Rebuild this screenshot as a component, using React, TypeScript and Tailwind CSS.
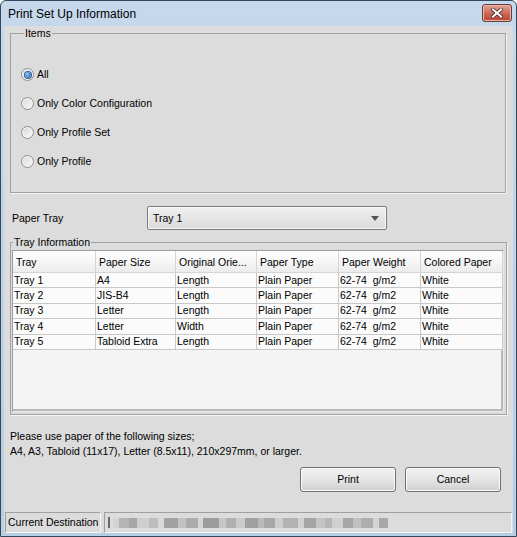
import { useState } from 'react';

const rows = [
  ['Tray 1', 'A4', 'Length', 'Plain Paper', '62-74  g/m2', 'White'],
  ['Tray 2', 'JIS-B4', 'Length', 'Plain Paper', '62-74  g/m2', 'White'],
  ['Tray 3', 'Letter', 'Length', 'Plain Paper', '62-74  g/m2', 'White'],
  ['Tray 4', 'Letter', 'Width', 'Plain Paper', '62-74  g/m2', 'White'],
  ['Tray 5', 'Tabloid Extra', 'Length', 'Plain Paper', '62-74  g/m2', 'White'],
];

const headers = ['Tray', 'Paper Size', 'Original Orie...', 'Paper Type', 'Paper Weight', 'Colored Paper'];

const items = ['All', 'Only Color Configuration', 'Only Profile Set', 'Only Profile'];

// obscured destination text, drawn as a pixel mosaic
const mosaic: [number, string][] = [
  [6, '#d4d4d4'], [10, '#b4b4b4'], [8, '#a6a6a6'], [12, '#cfcfcf'], [9, '#bdbdbd'],
  [6, '#dadada'], [14, '#a2a2a2'], [8, '#c2c2c2'], [12, '#acacac'], [5, '#d6d6d6'],
  [16, '#9c9c9c'], [7, '#c6c6c6'], [10, '#b0b0b0'], [9, '#cbcbcb'], [13, '#a0a0a0'],
  [6, '#bababa'], [11, '#a8a8a8'], [8, '#cecece'], [15, '#b2b2b2'], [6, '#d2d2d2'],
  [12, '#a4a4a4'], [9, '#c4c4c4'], [7, '#b6b6b6'], [11, '#d0d0d0'], [10, '#a6a6a6'],
  [8, '#c0c0c0'], [12, '#aeaeae'], [6, '#d4d4d4'], [9, '#a8a8a8'],
];

function Radio({ checked, label, onClick }: { checked: boolean; label: string; onClick: () => void }) {
  return (
    <button onClick={onClick} className="flex h-[29px] items-center gap-[3px] text-left">
      <span className="flex h-[13px] w-[13px] items-center justify-center rounded-full border border-[#8f8f8f] bg-gradient-to-br from-[#d8d8d8] to-[#fbfbfb] shadow-[inset_0_0_0_1px_#f4f4f4]">
        {checked && (
          <span className="h-[6px] w-[6px] rounded-full bg-[radial-gradient(circle_at_35%_35%,#8cc4f4,#1f5fae)] shadow-[0_0_0_1px_#2b5e96]" />
        )}
      </span>
      <span>{label}</span>
    </button>
  );
}

function Button({ children }: { children: React.ReactNode }) {
  return (
    <button className="h-[25px] w-[96px] rounded-[3px] border border-[#707070] bg-gradient-to-b from-[#f2f2f2] via-[#e6e6e6] to-[#cfcfcf] shadow-[inset_0_0_0_1px_#fbfbfb]">
      {children}
    </button>
  );
}

export default function App() {
  const [item, setItem] = useState(0);

  return (
    <div className="flex h-[537px] w-[517px] flex-col rounded-t-[6px] border border-[#34485c] bg-gradient-to-b from-[#c6d9ec] to-[#b8cee4] font-['Liberation_Sans',sans-serif] text-[10.5px] leading-[13px] text-black">
      {/* Title bar */}
      <div className="flex h-[25px] items-start justify-between pl-[7px] pr-[4px]">
        <span className="mt-[6px] text-[12px] leading-[14px]">Print Set Up Information</span>
        <button className="mt-[3px] flex h-[18px] w-[30px] items-center justify-center rounded-[3px] border border-[#6b3a3a] bg-gradient-to-b from-[#e3a496] via-[#cf6a5a] to-[#b8402f] shadow-[inset_0_0_0_1px_#eab4a8]">
          <svg width="12" height="10" viewBox="0 0 12 10">
            <path d="M2 1.5 L10 8.5 M10 1.5 L2 8.5" stroke="#4a2a2a" strokeWidth="3.6" strokeLinecap="square" />
            <path d="M2 1.5 L10 8.5 M10 1.5 L2 8.5" stroke="#fff" strokeWidth="2" strokeLinecap="square" />
          </svg>
        </button>
      </div>

      {/* Client area */}
      <div className="mx-[3px] mb-[3px] flex flex-1 flex-col bg-[#dcdcdc] pl-[6px] pr-[7px]">
        {/* Items */}
        <fieldset className="mt-[1px] h-[166px] border border-[#a2a2a2] pl-[10px] pt-[20px] shadow-[1px_1px_0_#f6f6f6]">
          <legend className="ml-[3px] px-[1px]">Items</legend>
          <div className="flex flex-col">
            {items.map((label, i) => (
              <Radio key={label} label={label} checked={item === i} onClick={() => setItem(i)} />
            ))}
          </div>
        </fieldset>

        {/* Paper tray */}
        <div className="mt-[13px] flex items-center">
          <span className="ml-[2px] w-[135px]">Paper Tray</span>
          <div className="flex h-[24px] w-[240px] items-center justify-between rounded-[2px] border border-[#7a7a7a] bg-gradient-to-b from-[#f0f0f0] to-[#dadada] pl-[5px] pr-[7px] shadow-[inset_0_0_0_1px_#f8f8f8]">
            <span>Tray 1</span>
            <svg width="8" height="5" viewBox="0 0 8 5">
              <path d="M0 0 H8 L4 5 Z" fill="#555" />
            </svg>
          </div>
        </div>

        {/* Tray information */}
        <fieldset className="mt-[6px] h-[179px] border border-[#a2a2a2] pl-[1px] pr-[2px] pt-[1px] shadow-[1px_1px_0_#f6f6f6]">
          <legend className="ml-[1px] px-[1px]">Tray Information</legend>
          <div className="h-[162px] border border-[#9c9c9c] border-b-[#e8e8e8] border-r-[#e8e8e8] bg-[#f4f4f4] shadow-[inset_-2px_-2px_0_#b9b9b9]">
            <div className="grid grid-cols-[83px_80px_81px_82px_82px_82px]">
              {headers.map((h) => (
                <div
                  key={h}
                  className="flex h-[22px] items-center border-b border-r border-[#d5d5d5] bg-gradient-to-b from-[#ffffff] to-[#ececec] pl-[3px] pt-[1px] whitespace-nowrap"
                >
                  {h}
                </div>
              ))}
              {rows.map((r) =>
                r.map((c, j) => (
                  <div
                    key={r[0] + j}
                    className="flex h-[15.4px] items-center border-b border-r border-[#c8c8c8] bg-[#fbfbfb] pl-[1px] whitespace-pre"
                  >
                    {c}
                  </div>
                )),
              )}
            </div>
          </div>
        </fieldset>

        {/* Note */}
        <div className="mt-[14px] leading-[15px]">
          <p>Please use paper of the following sizes;</p>
          <p>A4, A3, Tabloid (11x17), Letter (8.5x11), 210x297mm, or larger.</p>
        </div>

        <div className="mt-[8px] flex justify-end gap-[9px] pr-[5px]">
          <Button>Print</Button>
          <Button>Cancel</Button>
        </div>

        {/* Status bar */}
        <div className="-ml-[5px] -mr-[6px] mt-auto flex h-[21px] items-stretch gap-[3px]">
          <div className="flex w-[96px] items-center border border-[#a0a0a0] border-b-[#f4f4f4] border-r-[#f4f4f4] pl-[2px] whitespace-nowrap">
            Current Destination
          </div>
          <div className="flex flex-1 items-center border border-[#a0a0a0] border-b-[#f4f4f4] border-r-[#f4f4f4] pl-[3px]">
            <span className="mr-[3px] h-[11px] w-[2px] bg-[#6a6a6a]" />
            <div className="flex h-[10px] items-stretch">
              {mosaic.map(([w, c], i) => (
                <span key={i} className="block h-full" style={{ width: w, backgroundColor: c }} />
              ))}
            </div>
          </div>
        </div>
      </div>
    </div>
  );
}
